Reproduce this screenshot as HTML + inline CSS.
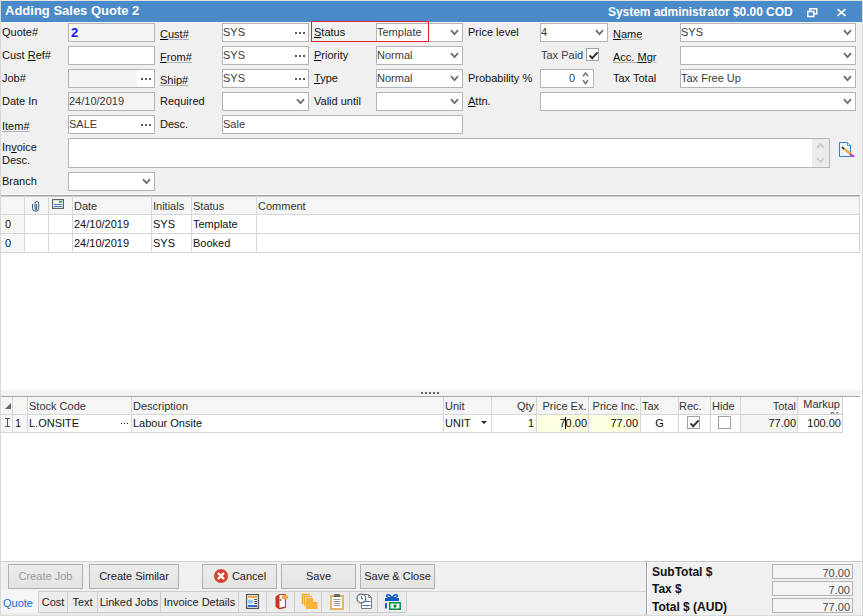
<!DOCTYPE html>
<html><head><meta charset="utf-8">
<style>
*{margin:0;padding:0;box-sizing:border-box}
html,body{width:863px;height:616px;overflow:hidden;background:#f0f0f0;font-family:"Liberation Sans",sans-serif;font-size:11px;color:#000}
.a{position:absolute;white-space:nowrap}
.lbl{position:absolute;white-space:nowrap;line-height:13px;color:#111}
.ul{text-decoration:underline;text-decoration-color:#b0b0b0}
.u{text-decoration:underline;text-decoration-color:#000}
.box{position:absolute;border:1px solid #b4b4b4;background:#fff;line-height:17px;padding-left:0;white-space:nowrap;overflow:hidden;color:#3a3a3a}
.ro{background:#f4f4f4}
.chev{position:absolute;right:3px;top:5px}
.dots{position:absolute;right:3px;top:8px}
.gl{position:absolute;background:#d6d6d6}
.ct{position:absolute;white-space:nowrap;line-height:13px;color:#111}
.hd{color:#333}
.btn{position:absolute;top:564px;height:25px;border:1px solid #b0b0b0;background:linear-gradient(#ececec,#e3e3e3);text-align:center;line-height:23px;font-size:11px;color:#222}
.tab{position:absolute;top:591px;height:22px;border-right:1px solid #cdcdcd;border-top:1px solid #cdcdcd;border-bottom:1px solid #c8c8c8;background:#ececec;line-height:21px;text-align:center;color:#222;font-size:11px}
.tbox{position:absolute;left:772px;width:81px;height:15px;border:1px solid #b4b4b4;background:#f4f4f4;text-align:right;padding-right:2px;line-height:16px;color:#4a4a4a;font-size:11px}
.tl{position:absolute;left:652px;font-weight:bold;font-size:12px;line-height:14px;color:#111}
</style></head><body>
<div class="a" style="left:0;top:0;width:863px;height:616px;border:1px solid #d8d8d8;border-top-color:#e4e4e4"></div>
<div class="a" style="left:1px;top:1px;width:861px;height:21px;background:#4b8ac8"></div>
<div class="a" style="left:1px;top:22px;width:861px;height:1px;background:#f6f4f2"></div>
<div class="a" style="left:5px;top:3px;font-size:13px;line-height:15px;color:#fff;font-weight:bold">Adding Sales Quote 2</div>
<div class="a" style="left:608px;top:5px;font-size:12px;line-height:14px;color:#fff;font-weight:bold;letter-spacing:-0.05px">System administrator $0.00 COD</div>
<svg class="a" style="left:807px;top:8px" width="11" height="10" viewBox="0 0 11 10"><path d="M3 3V0.75H9.75V5.75H7" fill="none" stroke="#fff" stroke-width="1.5"/><rect x="0.75" y="3.5" width="6" height="5" fill="none" stroke="#fff" stroke-width="1.5"/></svg>
<svg class="a" style="left:836px;top:8px" width="11" height="9" viewBox="0 0 11 9"><path d="M1.5 1.2L9.5 7.8M9.5 1.2L1.5 7.8" stroke="#fff" stroke-width="1.7"/></svg>
<div class="lbl" style="left:2px;top:26px">Quote#</div>
<div class="lbl" style="left:2px;top:49px">Cust <span class="u">R</span>ef#</div>
<div class="lbl" style="left:2px;top:72px">Job#</div>
<div class="lbl" style="left:2px;top:95px">Date In</div>
<div class="lbl" style="left:2px;top:120px"><span class="ul">Item#</span></div>
<div class="lbl" style="left:2px;top:141px;line-height:12.5px">In<span class="u">v</span>oice<br>Desc.</div>
<div class="lbl" style="left:2px;top:175px">Branch</div>
<div class="box ro" style="left:68px;top:23px;width:87px;height:19px;color:#1414f0;font-weight:bold;font-size:13px;padding-left:2px">2</div>
<div class="box " style="left:68px;top:46px;width:87px;height:19px;"></div>
<div class="box ro" style="left:68px;top:69px;width:87px;height:19px;"><div class="a" style="right:0;top:0;width:17px;height:17px;background:#fff"></div><svg class="dots" width="10" height="2" viewBox="0 0 10 2"><rect x="0" y="0" width="2" height="2" fill="#555"/><rect x="4" y="0" width="2" height="2" fill="#555"/><rect x="8" y="0" width="2" height="2" fill="#555"/></svg></div>
<div class="box ro" style="left:68px;top:92px;width:87px;height:19px;color:#3a3a3a">24/10/2019</div>
<div class="box " style="left:68px;top:115px;width:87px;height:19px;">SALE<svg class="dots" width="10" height="2" viewBox="0 0 10 2"><rect x="0" y="0" width="2" height="2" fill="#555"/><rect x="4" y="0" width="2" height="2" fill="#555"/><rect x="8" y="0" width="2" height="2" fill="#555"/></svg></div>
<div class="box " style="left:68px;top:138px;width:762px;height:30px;"><div class="a" style="right:0;top:0;width:17px;height:28px;background:#ececec"></div><svg class="a" style="right:4px;top:3px" width="9" height="22" viewBox="0 0 9 22"><path d="M1 6L4.5 2L8 6M1 16L4.5 20L8 16" fill="none" stroke="#c8c8c8" stroke-width="1.8"/></svg></div>
<div class="box " style="left:68px;top:172px;width:87px;height:19px;"><svg class="chev" width="9" height="7" viewBox="0 0 9 7"><path d="M1 1.2L4.5 5.2L8 1.2" fill="none" stroke="#6e6e6e" stroke-width="1.8"/></svg></div>
<div class="lbl" style="left:160px;top:28px"><span class="ul"><span class="u">C</span>ust#</span></div>
<div class="lbl" style="left:160px;top:51px"><span class="ul"><span class="u">F</span>rom#</span></div>
<div class="lbl" style="left:160px;top:74px"><span class="ul">Ship#</span></div>
<div class="lbl" style="left:160px;top:95px">Required</div>
<div class="lbl" style="left:160px;top:118px">Desc.</div>
<div class="box " style="left:222px;top:23px;width:87px;height:19px;">SYS<svg class="dots" width="10" height="2" viewBox="0 0 10 2"><rect x="0" y="0" width="2" height="2" fill="#555"/><rect x="4" y="0" width="2" height="2" fill="#555"/><rect x="8" y="0" width="2" height="2" fill="#555"/></svg></div>
<div class="box " style="left:222px;top:46px;width:87px;height:19px;">SYS<svg class="dots" width="10" height="2" viewBox="0 0 10 2"><rect x="0" y="0" width="2" height="2" fill="#555"/><rect x="4" y="0" width="2" height="2" fill="#555"/><rect x="8" y="0" width="2" height="2" fill="#555"/></svg></div>
<div class="box " style="left:222px;top:69px;width:87px;height:19px;">SYS<svg class="dots" width="10" height="2" viewBox="0 0 10 2"><rect x="0" y="0" width="2" height="2" fill="#555"/><rect x="4" y="0" width="2" height="2" fill="#555"/><rect x="8" y="0" width="2" height="2" fill="#555"/></svg></div>
<div class="box " style="left:222px;top:92px;width:87px;height:19px;"><svg class="chev" width="9" height="7" viewBox="0 0 9 7"><path d="M1 1.2L4.5 5.2L8 1.2" fill="none" stroke="#6e6e6e" stroke-width="1.8"/></svg></div>
<div class="box " style="left:222px;top:115px;width:241px;height:19px;">Sale</div>
<div class="lbl" style="left:314px;top:26px"><span class="u">S</span>tatus</div>
<div class="lbl" style="left:314px;top:49px"><span class="u">P</span>riority</div>
<div class="lbl" style="left:314px;top:72px"><span class="u">T</span>ype</div>
<div class="lbl" style="left:314px;top:95px">Valid until</div>
<div class="box " style="left:376px;top:23px;width:87px;height:19px;color:#3a3a3a">Template<svg class="chev" width="9" height="7" viewBox="0 0 9 7"><path d="M1 1.2L4.5 5.2L8 1.2" fill="none" stroke="#6e6e6e" stroke-width="1.8"/></svg></div>
<div class="a" style="left:311px;top:21px;width:118px;height:21px;border:1px solid #e3222d"></div>
<div class="box " style="left:376px;top:46px;width:87px;height:19px;color:#3a3a3a">Normal<svg class="chev" width="9" height="7" viewBox="0 0 9 7"><path d="M1 1.2L4.5 5.2L8 1.2" fill="none" stroke="#6e6e6e" stroke-width="1.8"/></svg></div>
<div class="box " style="left:376px;top:69px;width:87px;height:19px;color:#3a3a3a">Normal<svg class="chev" width="9" height="7" viewBox="0 0 9 7"><path d="M1 1.2L4.5 5.2L8 1.2" fill="none" stroke="#6e6e6e" stroke-width="1.8"/></svg></div>
<div class="box " style="left:376px;top:92px;width:87px;height:19px;"><svg class="chev" width="9" height="7" viewBox="0 0 9 7"><path d="M1 1.2L4.5 5.2L8 1.2" fill="none" stroke="#6e6e6e" stroke-width="1.8"/></svg></div>
<div class="lbl" style="left:468px;top:26px">Price level</div>
<div class="lbl" style="left:541px;top:49px;color:#3c3c3c">Tax Paid</div>
<div class="a" style="left:586px;top:48px;width:13px;height:13px;border:1px solid #a0a0a0;background:#fff"><svg class="a" style="left:1px;top:1px" width="11" height="11" viewBox="0 0 11 11"><path d="M1.6 5.3L4.2 8.3L9.6 2.4" fill="none" stroke="#333" stroke-width="2"/></svg></div>
<div class="lbl" style="left:468px;top:72px">Probability %</div>
<div class="lbl" style="left:468px;top:95px"><span class="u">A</span>ttn.</div>
<div class="box " style="left:540px;top:23px;width:68px;height:19px;color:#3a3a3a">4<svg class="chev" width="9" height="7" viewBox="0 0 9 7"><path d="M1 1.2L4.5 5.2L8 1.2" fill="none" stroke="#6e6e6e" stroke-width="1.8"/></svg></div>
<div class="box " style="left:540px;top:69px;width:54px;height:19px;color:#3a3a3a"><div class="a" style="left:28px;top:0">0</div><svg class="a" style="left:41px;top:0px" width="7" height="17" viewBox="0 0 7 17"><path d="M1 6.3L3.5 3L6 6.3M1 10.3L3.5 13.6L6 10.3" fill="none" stroke="#777" stroke-width="1.6"/></svg></div>
<div class="box " style="left:540px;top:92px;width:316px;height:19px;"><svg class="chev" width="9" height="7" viewBox="0 0 9 7"><path d="M1 1.2L4.5 5.2L8 1.2" fill="none" stroke="#6e6e6e" stroke-width="1.8"/></svg></div>
<div class="lbl" style="left:613px;top:28px"><span class="ul"><span class="u">N</span>ame</span></div>
<div class="lbl" style="left:613px;top:51px"><span class="ul">Acc. <span class="u">M</span>gr</span></div>
<div class="lbl" style="left:613px;top:72px">Tax Total</div>
<div class="box " style="left:680px;top:23px;width:176px;height:19px;color:#3a3a3a">SYS<svg class="chev" width="9" height="7" viewBox="0 0 9 7"><path d="M1 1.2L4.5 5.2L8 1.2" fill="none" stroke="#6e6e6e" stroke-width="1.8"/></svg></div>
<div class="box " style="left:680px;top:46px;width:176px;height:19px;"><svg class="chev" width="9" height="7" viewBox="0 0 9 7"><path d="M1 1.2L4.5 5.2L8 1.2" fill="none" stroke="#6e6e6e" stroke-width="1.8"/></svg></div>
<div class="box " style="left:680px;top:69px;width:176px;height:19px;color:#3a3a3a">Tax Free Up<svg class="chev" width="9" height="7" viewBox="0 0 9 7"><path d="M1 1.2L4.5 5.2L8 1.2" fill="none" stroke="#6e6e6e" stroke-width="1.8"/></svg></div>
<svg class="a" style="left:838px;top:142px" width="18" height="16" viewBox="0 0 18 16"><path d="M1.5 0.5H9.5L12.5 3.5V14.5H1.5Z" fill="#e8f2fc" stroke="#3a7fd0"/><path d="M9.5 0.5V3.5H12.5" fill="#fff" stroke="#3a7fd0" stroke-width="0.8"/><path d="M5 6L13 12" stroke="#e8b030" stroke-width="2.2"/><path d="M4 5.2L6 6.8" stroke="#222" stroke-width="1.5"/><path d="M12 11L16.5 13.5V15H13L11.5 12.5Z" fill="#c040c0"/></svg>
<div class="a" style="left:1px;top:194px;width:861px;height:1px;background:#fbfbfb"></div>
<div class="a" style="left:1px;top:195px;width:861px;height:366px;background:#fff"></div>
<div class="a" style="left:1px;top:195px;width:859px;height:1px;background:#a6a6a6"></div>
<div class="a" style="left:1px;top:196px;width:859px;height:1px;background:#cacaca"></div><div class="a" style="left:1px;top:197px;width:858px;height:17px;background:#f5f5f5"></div>
<div class="a" style="left:1px;top:214px;width:23px;height:38px;background:#f7f7f7"></div>
<div class="gl" style="left:1px;top:214px;width:859px;height:1px"></div>
<div class="gl" style="left:1px;top:233px;width:859px;height:1px"></div>
<div class="gl" style="left:1px;top:252px;width:859px;height:1px"></div>
<div class="gl" style="left:24px;top:196px;width:1px;height:56px"></div>
<div class="gl" style="left:48px;top:196px;width:1px;height:56px"></div>
<div class="gl" style="left:72px;top:196px;width:1px;height:56px"></div>
<div class="gl" style="left:151px;top:196px;width:1px;height:56px"></div>
<div class="gl" style="left:191px;top:196px;width:1px;height:56px"></div>
<div class="gl" style="left:256px;top:196px;width:1px;height:56px"></div>
<div class="gl" style="left:859px;top:196px;width:1px;height:57px"></div>
<svg class="a" style="left:31px;top:200px" width="9" height="13" viewBox="0 0 9 13"><path d="M1.5 4V8.3A3.1 3 0 0 0 7.7 8.3V3.8A1.85 2.4 0 0 0 4 3.8V9.2A0.8 0.8 0 0 0 5.6 9.2V4.2" fill="none" stroke="#2f5580" stroke-width="1"/></svg>
<svg class="a" style="left:52px;top:199px" width="12" height="10" viewBox="0 0 12 10"><rect x="0.6" y="0.6" width="10.8" height="8.8" fill="#fff" stroke="#606060" stroke-width="1.2"/><path d="M2 5.5H10M2 7.5H10" stroke="#3a78c8"/><rect x="7" y="1.8" width="3" height="2" fill="#3cb371"/></svg>
<div class="ct hd" style="left:74px;top:200px">Date</div>
<div class="ct hd" style="left:153px;top:200px">Initials</div>
<div class="ct hd" style="left:193px;top:200px">Status</div>
<div class="ct hd" style="left:258px;top:200px">Comment</div>
<div class="ct" style="left:5px;top:218px">0</div><div class="ct" style="left:74px;top:218px">24/10/2019</div><div class="ct" style="left:153px;top:218px">SYS</div><div class="ct" style="left:193px;top:218px">Template</div>
<div class="ct" style="left:5px;top:237px">0</div><div class="ct" style="left:74px;top:237px">24/10/2019</div><div class="ct" style="left:153px;top:237px">SYS</div><div class="ct" style="left:193px;top:237px">Booked</div>
<div class="a" style="left:1px;top:390px;width:861px;height:6px;background:#f2f2f2"></div>
<svg class="a" style="left:421px;top:392px" width="19" height="2" viewBox="0 0 19 2"><g fill="#656565"><rect x="0" y="0" width="2" height="2"/><rect x="4" y="0" width="2" height="2"/><rect x="8" y="0" width="2" height="2"/><rect x="12" y="0" width="2" height="2"/><rect x="16" y="0" width="2" height="2"/></g></svg>
<div class="a" style="left:1px;top:396px;width:859px;height:1px;background:#a6a6a6"></div>
<div class="a" style="left:1px;top:397px;width:841px;height:17px;background:#f5f5f5"></div>
<div class="a" style="left:1px;top:415px;width:11px;height:17px;background:#f7f7f7"></div><div class="a" style="left:13px;top:415px;width:14px;height:17px;background:#f7f7f7"></div>
<div class="a" style="left:536px;top:414px;width:104px;height:18px;background:#fdfddf"></div>
<div class="a" style="left:740px;top:414px;width:57px;height:18px;background:#f4f4f4"></div>
<div class="gl" style="left:1px;top:414px;width:842px;height:1px"></div>
<div class="gl" style="left:1px;top:432px;width:842px;height:1px"></div>
<div class="gl" style="left:12px;top:397px;width:1px;height:36px"></div>
<div class="gl" style="left:27px;top:397px;width:1px;height:36px"></div>
<div class="gl" style="left:131px;top:397px;width:1px;height:36px"></div>
<div class="gl" style="left:443px;top:397px;width:1px;height:36px"></div>
<div class="gl" style="left:491px;top:397px;width:1px;height:36px"></div>
<div class="gl" style="left:536px;top:397px;width:1px;height:36px"></div>
<div class="gl" style="left:588px;top:397px;width:1px;height:36px"></div>
<div class="gl" style="left:640px;top:397px;width:1px;height:36px"></div>
<div class="gl" style="left:678px;top:397px;width:1px;height:36px"></div>
<div class="gl" style="left:710px;top:397px;width:1px;height:36px"></div>
<div class="gl" style="left:740px;top:397px;width:1px;height:36px"></div>
<div class="gl" style="left:797px;top:397px;width:1px;height:36px"></div>
<div class="gl" style="left:842px;top:397px;width:1px;height:36px"></div>
<svg class="a" style="left:5px;top:403px" width="6" height="6" viewBox="0 0 6 6"><path d="M6 0V6H0Z" fill="#666"/></svg>
<svg class="a" style="left:5px;top:418px" width="5" height="9" viewBox="0 0 5 9"><path d="M0 0.5H5M2.5 0.5V8.5M0 8.5H5" fill="none" stroke="#555"/></svg>
<div class="ct hd" style="left:29px;top:400px;">Stock Code</div>
<div class="ct hd" style="left:133px;top:400px;">Description</div>
<div class="ct hd" style="left:445px;top:400px;">Unit</div>
<div class="ct hd" style="left:491px;top:400px;width:43px;text-align:right;">Qty</div>
<div class="ct hd" style="left:539px;top:400px;width:51px;text-align:center;">Price Ex.</div>
<div class="ct hd" style="left:590px;top:400px;width:51px;text-align:center;">Price Inc.</div>
<div class="ct hd" style="left:642px;top:400px;">Tax</div>
<div class="ct hd" style="left:679px;top:400px;">Rec.</div>
<div class="ct hd" style="left:712px;top:400px;">Hide</div>
<div class="ct hd" style="left:742px;top:400px;width:54px;text-align:right;">Total</div>
<div class="ct hd" style="left:798px;top:398px;width:42px;height:16px;overflow:hidden;text-align:right;line-height:12px">Markup<br>%</div>
<div class="ct" style="left:15px;top:417px">1</div>
<div class="ct" style="left:29px;top:417px">L.ONSITE</div>
<svg class="a" style="left:121px;top:423px" width="7" height="1" viewBox="0 0 7 1"><rect x="0" y="0" width="1" height="1" fill="#111"/><rect x="3" y="0" width="1" height="1" fill="#111"/><rect x="6" y="0" width="1" height="1" fill="#111"/></svg>
<div class="ct" style="left:133px;top:417px">Labour Onsite</div>
<div class="ct" style="left:445px;top:417px">UNIT</div>
<svg class="a" style="left:481px;top:421px" width="6" height="4" viewBox="0 0 6 4"><path d="M0 0H6L3 3Z" fill="#222"/></svg>
<div class="ct" style="left:491px;top:417px;width:43px;text-align:right">1</div>
<div class="ct" style="left:538px;top:417px;width:49px;text-align:right">70.00</div>
<div class="a" style="left:565px;top:417px;width:1px;height:12px;background:#000"></div>
<div class="ct" style="left:589px;top:417px;width:49px;text-align:right">77.00</div>
<div class="ct" style="left:641px;top:417px;width:37px;text-align:center">G</div>
<div class="a" style="left:687px;top:416px;width:13px;height:13px;border:1px solid #a0a0a0;background:#fff"><svg class="a" style="left:1px;top:1px" width="11" height="11" viewBox="0 0 11 11"><path d="M1.6 5.3L4.2 8.3L9.6 2.4" fill="none" stroke="#333" stroke-width="2"/></svg></div>
<div class="a" style="left:718px;top:416px;width:13px;height:13px;border:1px solid #a0a0a0;background:#fff"></div>
<div class="ct" style="left:741px;top:417px;width:55px;text-align:right">77.00</div>
<div class="ct" style="left:798px;top:417px;width:43px;text-align:right">100.00</div>
<div class="a" style="left:1px;top:561px;width:861px;height:1px;background:#d0d0d0"></div>
<div class="a" style="left:1px;top:562px;width:861px;height:53px;background:#f0f0f0"></div>
<div class="btn" style="left:8px;width:75px;color:#9a9a9a">Create Job</div>
<div class="btn" style="left:89px;width:90px">Create Similar</div>
<div class="btn" style="left:202px;width:75px;padding-left:19px">Cancel</div>
<svg class="a" style="left:214px;top:569px" width="14" height="14" viewBox="0 0 14 14"><circle cx="7" cy="7" r="7" fill="#d2452f"/><path d="M4 4L10 10M10 4L4 10" stroke="#fff" stroke-width="2.4"/></svg>
<div class="btn" style="left:281px;width:75px">Save</div>
<div class="btn" style="left:360px;width:75px">Save &amp; Close</div>
<div class="a" style="left:1px;top:613px;width:645px;height:2px;background:#ebebeb"></div><div class="a" style="left:1px;top:615px;width:645px;height:1px;background:#dcdcdc"></div>
<div class="a" style="left:1px;top:590px;width:37px;height:23px;background:#f5f5f5"></div><div class="a" style="left:3px;top:597px;color:#1a6fd0;line-height:13px">Quote</div>
<div class="tab" style="left:38px;width:30px;border-left:1px solid #cdcdcd;">Cost</div>
<div class="tab" style="left:68px;width:30px;">Text</div>
<div class="tab" style="left:98px;width:63px;">Linked Jobs</div>
<div class="tab" style="left:161px;width:78px;">Invoice Details</div>
<div class="tab" style="left:239px;width:28px;"></div>
<div class="tab" style="left:267px;width:28px;"></div>
<div class="tab" style="left:295px;width:27px;"></div>
<div class="tab" style="left:322px;width:28px;"></div>
<div class="tab" style="left:350px;width:28px;"></div>
<div class="tab" style="left:378px;width:29px;"></div>
<div class="a" style="left:407px;top:591px;width:239px;height:1px;background:#d6d6d6"></div>
<svg class="a" style="left:245px;top:593px" width="15" height="17" viewBox="0 0 15 17"><rect x="1.6" y="1.6" width="11.8" height="13.8" fill="#fff" stroke="#555" stroke-width="1.3"/><rect x="3" y="3" width="9" height="2" fill="#f0a840"/><rect x="3" y="6.5" width="5" height="4" fill="#8cc8f0"/><path d="M9 6.5H12M9 8.5H12M9 10.5H12" stroke="#555"/><rect x="3" y="12" width="9" height="2" fill="#2b6cc0"/></svg>
<svg class="a" style="left:274px;top:593px" width="15" height="17" viewBox="0 0 15 17"><path d="M1.5 3.5L5 1.5V16L1.5 14Z" fill="#cc3322"/><path d="M5 1.5H11.5V14.5L5 16Z" fill="#fff" stroke="#cc3322"/><path d="M4.5 15.5L11.5 14" stroke="#cc3322" stroke-width="1.2"/><ellipse cx="11" cy="4.3" rx="3.2" ry="2.2" fill="#e8a850"/><circle cx="6.5" cy="7" r="0.8" fill="#333"/></svg>
<svg class="a" style="left:301px;top:593px" width="18" height="17" viewBox="0 0 18 17"><path d="M1.5 11V1.5H9" fill="none" stroke="#f0a830" stroke-width="1.6"/><path d="M3.5 13V3.5H11" fill="none" stroke="#f0a830" stroke-width="1.6"/><path d="M5 5H12L16.5 9V16H5Z" fill="#fbb040"/><path d="M12 5V9H16.5" fill="#fff" opacity="0.7"/></svg>
<svg class="a" style="left:329px;top:593px" width="16" height="17" viewBox="0 0 16 17"><rect x="1" y="2" width="14" height="15" fill="#e9b264"/><rect x="3" y="4" width="10" height="11" fill="#fff"/><path d="M5.5 1H10.5L11.5 4H4.5Z" fill="#666"/><path d="M4.5 6.5H11.5M4.5 8.5H11.5M4.5 10.5H11.5M4.5 12.5H11.5" stroke="#999"/></svg>
<svg class="a" style="left:356px;top:593px" width="17" height="17" viewBox="0 0 17 17"><path d="M5.5 1.5H12.5L15.5 4.5V15.5H5.5Z" fill="#fff" stroke="#777"/><path d="M12.5 1.5V4.5H15.5" fill="none" stroke="#777" stroke-width="0.8"/><circle cx="5.4" cy="5.5" r="4.4" fill="#fff" stroke="#666" stroke-width="1.3"/><path d="M5.4 3V5.8H7.3" fill="none" stroke="#2b6cc0" stroke-width="1"/><path d="M7.5 8.5H14.5M6.5 12.5H14.5" stroke="#3a78c8" stroke-width="1.1"/></svg>
<svg class="a" style="left:384px;top:593px" width="18" height="18" viewBox="0 0 18 18"><path d="M7.8 4.6C6 1.2 2.6 0.8 2.6 3.2C2.6 4.6 5 4.6 7.8 4.6ZM8.2 4.6C10 1.2 13.4 0.8 13.4 3.2C13.4 4.6 11 4.6 8.2 4.6Z" fill="none" stroke="#1a5ec0" stroke-width="1.5"/><rect x="1" y="5" width="14" height="3" fill="#1a5ec0"/><rect x="1" y="10" width="2" height="5.5" fill="#1a5ec0"/><rect x="5.8" y="9.8" width="10.4" height="6.4" fill="#fff" stroke="#17904a" stroke-width="1.6"/><circle cx="11" cy="13" r="1.8" fill="#17904a"/></svg>
<div class="a" style="left:646px;top:561px;width:216px;height:55px;background:#f0f0f0;border-left:1px solid #a0a0a0;border-top:1px solid #c4c4c4"></div><div class="a" style="left:647px;top:562px;width:215px;height:1px;background:#fafafa"></div><div class="a" style="left:647px;top:562px;width:1px;height:54px;background:#fafafa"></div>
<div class="a" style="left:861px;top:562px;width:1px;height:53px;background:#fafafa"></div><div class="a" style="left:862px;top:561px;width:1px;height:55px;background:#d8d8d8"></div><div class="a" style="left:646px;top:615px;width:217px;height:1px;background:#dadada"></div>
<div class="tl" style="top:565px">SubTotal $</div>
<div class="tl" style="top:582px">Tax $</div>
<div class="tl" style="top:600px">Total $ (AUD)</div>
<div class="tbox" style="top:564px">70.00</div>
<div class="tbox" style="top:581px">7.00</div>
<div class="tbox" style="top:598px">77.00</div>
</body></html>
